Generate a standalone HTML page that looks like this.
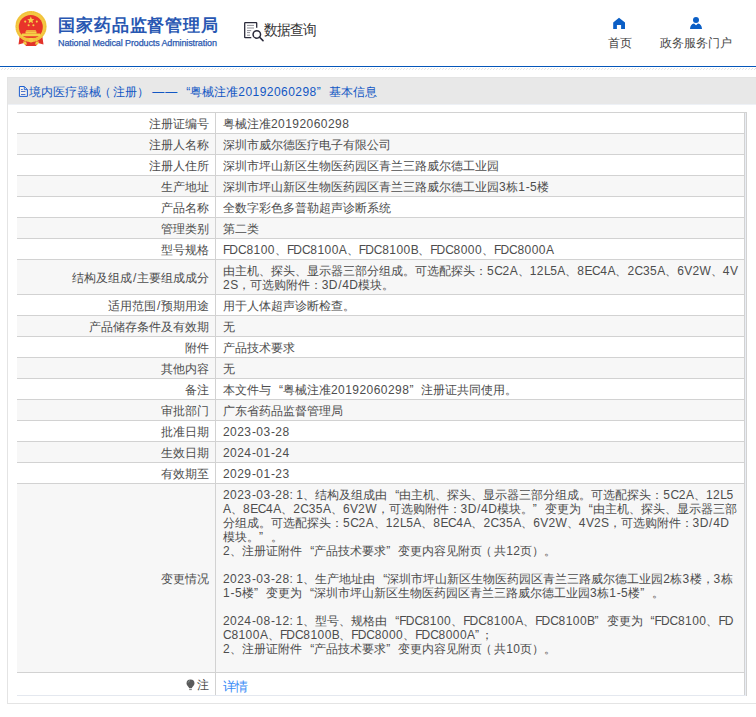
<!DOCTYPE html>
<html><head><meta charset="utf-8">
<style>
*{margin:0;padding:0;box-sizing:border-box}
html,body{width:756px;height:717px;overflow:hidden;background:#fff}
body{font-family:"Liberation Sans",sans-serif;font-size:12px;color:#4d4d4d;position:relative}
.abs{position:absolute}
#hdr{position:absolute;left:0;top:0;width:756px;height:66px}
#blueline{position:absolute;left:0;top:66px;width:756px;height:1px;background:#0556b9}
#hatch1{position:absolute;left:0;top:68px;width:756px;height:1px;background:repeating-linear-gradient(90deg,#fff 0 2px,#e2e2e2 2px 3px)}
#hatch2{position:absolute;left:0;top:69px;width:756px;height:1px;background:repeating-linear-gradient(90deg,#fff 0 1px,#e6e6e6 1px 2px,#fff 2px 3px)}
#title{left:58px;top:14px;font-size:17px;font-weight:bold;color:#2857b2;white-space:nowrap;letter-spacing:0.9px}
#eng{left:58px;top:37.5px;font-size:9px;color:#2a58b0;white-space:nowrap;letter-spacing:-0.12px;-webkit-text-stroke:0.25px #2a58b0}
#dq{left:264px;top:21px;font-size:14px;color:#333;white-space:nowrap;letter-spacing:-1.1px;transform:scaleY(1.1);transform-origin:0 0}
.nav{font-size:12px;color:#444;white-space:nowrap}
#panel{position:absolute;left:7px;top:77px;width:760px;height:627px;border:1px solid #e4e4e4;border-right:none}
#ph{position:absolute;left:0;top:0;width:100%;height:27px;background:#e8e8e8;border-bottom:1px solid #eef1f6}
#ph .t{position:absolute;left:21px;top:6px;color:#1257c4;font-size:12px;white-space:nowrap}
#tbl{position:absolute;left:17px;top:112px;width:730px;border-collapse:collapse}
.row{position:absolute;left:17px;width:728px;border-top:1px solid #d2d2d2}
#rb{position:absolute;left:744px;top:112px;width:3px;height:584px;border:1px solid #d2d2d2;border-bottom:none;background:#e9edf4}
.row.g{background:#f7f7f7}
.row.last{border-bottom:1px solid #e4e8ef}
.lab{position:absolute;left:0;width:198px;text-align:right;padding-right:6px;top:0;bottom:0;display:flex;align-items:center;justify-content:flex-end;line-height:14px;padding-top:2px;white-space:nowrap}
.val{position:absolute;left:198px;right:0;top:0;bottom:0;border-left:1px solid #d2d2d2;border-right:1px solid #d2d2d2;padding:4px 0 0 7px;line-height:14px;white-space:nowrap}
.a{letter-spacing:0px}
.d{letter-spacing:0.45px}
.f{letter-spacing:-0.47px}
.sl{padding:0 0.7px;font-weight:normal}
.hy{padding:0 0.4px;font-weight:normal}
.ql{margin-left:8px}
.qr{margin-right:8px}
.qr2{margin-right:1.5px}
.lp{position:relative;left:-2.5px}
.dash{letter-spacing:1px}
.link{color:#3a8cf6;font-size:13px;letter-spacing:-1.1px;position:relative;top:2.5px}
.bulb{margin-right:2px}
</style></head><body>

<!-- emblem -->
<svg class="abs" style="left:10px;top:8px" width="42" height="42" viewBox="10 8 42 42">
 <path d="M20 34 L18.5 44.5 L24 43 L26 46 L36 46 L38 43 L43.5 44.5 L42 34 Z" fill="#e2332a"/>
 <circle cx="31" cy="26.5" r="15.6" fill="#f4c842"/>
 <circle cx="31" cy="26.5" r="14.6" fill="none" stroke="#e9b830" stroke-width="0.8" stroke-dasharray="1.2 1"/>
 <circle cx="30.8" cy="27" r="12" fill="#e8342a"/>
 <path d="M30.8 16.6 l1.05 2.3 2.5 0.25 -1.9 1.65 0.55 2.45 -2.2 -1.3 -2.2 1.3 0.55 -2.45 -1.9 -1.65 2.5 -0.25z" fill="#f5d046"/>
 <circle cx="25.2" cy="21.6" r="1.05" fill="#f5d046"/>
 <circle cx="36.8" cy="21.6" r="1.05" fill="#f5d046"/>
 <circle cx="28.6" cy="25.3" r="1.05" fill="#f5d046"/>
 <circle cx="33.4" cy="25.3" r="1.05" fill="#f5d046"/>
 <path d="M26.5 30.2 h9 l1.2 1.6 h-11.4z M25.5 32 h11 v1.2 h-11z M22 33.4 h18 l1 2.8 h-20z" fill="#f5d046"/>
 <path d="M22 36.5 q9 3 18 0 l-1.5 2.5 q-7.5 2.5 -15 0z" fill="#f3c23c"/>
 <circle cx="31" cy="40.2" r="2.4" fill="#f5cc44"/>
 <path d="M23 41.5 h3 l1 3 h-3z M36 41.5 h3 l-1 3 h-3z" fill="#f5cc44"/>
</svg>
<div id="title" class="abs">国家药品监督管理局</div>
<div id="eng" class="abs">National Medical Products Administration</div>

<!-- data query icon -->
<svg class="abs" style="left:240px;top:18px" width="28" height="28" viewBox="240 18 28 28">
 <path d="M251.3 37.7 H245.2 Q244.7 37.7 244.7 37.2 V23.2 Q244.7 22.7 245.2 22.7 H256.2 Q256.7 22.7 256.7 23.2 V27.8" fill="none" stroke="#2b2b3b" stroke-width="1.3"/>
 <path d="M247 25.4 h7 M247 28 h7 M247 30.6 h4.2 M247 32.6 h3 M247 35.2 h3" stroke="#2b2b3b" stroke-width="0.7" opacity="0.75"/>
 <circle cx="256.8" cy="34.4" r="3.75" fill="none" stroke="#2b2b3b" stroke-width="1.5"/>
 <path d="M259.4 37 L263 40.6" stroke="#2b2b3b" stroke-width="1.6" stroke-linecap="round"/>
</svg>
<div id="dq" class="abs">数据查询</div>

<!-- nav -->
<svg class="abs" style="left:613px;top:17px" width="13" height="13" viewBox="0 0 13 13">
 <path d="M6 0.8 L12 5.6 V11.9 H8.1 V8.1 H3.9 V11.9 H0.2 V5.6 Z" fill="#0b5fc6"/>
</svg>
<div class="abs nav" style="left:608px;top:35px">首页</div>
<svg class="abs" style="left:689px;top:16px" width="14" height="14" viewBox="0 0 14 14">
 <circle cx="7" cy="4" r="3" fill="#0b5fc6"/>
 <path d="M1 13.1 Q1.3 8.2 5 7.6 L7 9.2 L9 7.6 Q12.7 8.2 13 13.1 Z" fill="#0b5fc6"/>
</svg>
<div class="abs nav" style="left:660px;top:35px">政务服务门户</div>

<div id="blueline"></div>
<div id="hatch1"></div><div id="hatch2"></div>

<div id="panel">
 <div id="ph"><svg style="position:absolute;left:10px;top:8px" width="11" height="12" viewBox="18 86 11 12"><path d="M19.4 86.5 H24.3 L27.4 89.6 V96.4 H19.4 Z" fill="#f4f1ee" stroke="#1c5fd0" stroke-width="1"/><path d="M24.3 86.6 V89.6 H27.3" fill="none" stroke="#1c5fd0" stroke-width="0.9"/><path d="M21 89.5 h1.8 M21 91.5 h4.4 M21 94.5 h4.4" stroke="#3f68c8" stroke-width="0.9"/></svg><div class="t">境内医疗器械<span class="lp">（</span>注册）<span class="a"> </span><span class="dash">——</span><span class="ql">“</span>粤械注准<span class="a"><span class="d">20192060298</span></span><span class="qr">”</span>基本信息</div></div>
</div>

<div id="tblwrap">
<div id="rb"></div>
<div class="row" style="top:112px;height:21px"><div class="lab">注册证编号</div><div class="val">粤械注准<span class="a"><span class="d">20192060298</span></span></div></div>
<div class="row g" style="top:133px;height:21px"><div class="lab">注册人名称</div><div class="val">深圳市威尔德医疗电子有限公司</div></div>
<div class="row" style="top:154px;height:21px"><div class="lab">注册人住所</div><div class="val">深圳市坪山新区生物医药园区青兰三路威尔德工业园</div></div>
<div class="row g" style="top:175px;height:21px"><div class="lab">生产地址</div><div class="val">深圳市坪山新区生物医药园区青兰三路威尔德工业园<span class="a"><span class="d">3</span></span>栋<span class="a"><span class="d">1</span><b class="hy">-</b><span class="d">5</span></span>楼</div></div>
<div class="row" style="top:196px;height:21px"><div class="lab">产品名称</div><div class="val">全数字彩色多普勒超声诊断系统</div></div>
<div class="row g" style="top:217px;height:21px"><div class="lab">管理类别</div><div class="val">第二类</div></div>
<div class="row" style="top:238px;height:21px"><div class="lab">型号规格</div><div class="val"><span class="a"><span style="letter-spacing:-1.0px">F</span>D<span style="letter-spacing:-0.3px">C</span><span class="d">8100</span></span>、<span class="a"><span style="letter-spacing:-1.0px">F</span>D<span style="letter-spacing:-0.3px">C</span><span class="d">8100</span>A</span>、<span class="a"><span style="letter-spacing:-1.0px">F</span>D<span style="letter-spacing:-0.3px">C</span><span class="d">8100</span><span style="letter-spacing:-0.5px">B</span></span>、<span class="a"><span style="letter-spacing:-1.0px">F</span>D<span style="letter-spacing:-0.3px">C</span><span class="d">8000</span></span>、<span class="a"><span style="letter-spacing:-1.0px">F</span>D<span style="letter-spacing:-0.3px">C</span><span class="d">8000</span>A</span></div></div>
<div class="row g" style="top:259px;height:35px"><div class="lab">结构及组成<span class="a"><b class="sl">/</b></span>主要组成成分</div><div class="val">由主机、探头、显示器三部分组成。可选配探头：<span class="a"><span class="d">5</span><span style="letter-spacing:-0.3px">C</span><span class="d">2</span>A</span>、<span class="a"><span class="d">12</span><span style="letter-spacing:-0.4px">L</span><span class="d">5</span>A</span>、<span class="a"><span class="d">8</span><span style="letter-spacing:-0.5px">E</span><span style="letter-spacing:-0.3px">C</span><span class="d">4</span>A</span>、<span class="a"><span class="d">2</span><span style="letter-spacing:-0.3px">C</span><span class="d">35</span>A</span>、<span class="a"><span class="d">6</span>V<span class="d">2</span>W</span>、<span class="a"><span class="d">4</span>V</span><br><span class="a"><span class="d">2</span><span style="letter-spacing:-0.5px">S</span></span>，可选购附件：<span class="a"><span class="d">3</span>D<b class="sl">/</b><span class="d">4</span>D</span>模块。</div></div>
<div class="row" style="top:294px;height:21px"><div class="lab">适用范围<span class="a"><b class="sl">/</b></span>预期用途</div><div class="val">用于人体超声诊断检查。</div></div>
<div class="row g" style="top:315px;height:21px"><div class="lab">产品储存条件及有效期</div><div class="val">无</div></div>
<div class="row" style="top:336px;height:21px"><div class="lab">附件</div><div class="val">产品技术要求</div></div>
<div class="row g" style="top:357px;height:21px"><div class="lab">其他内容</div><div class="val">无</div></div>
<div class="row" style="top:378px;height:21px"><div class="lab">备注</div><div class="val">本文件与<span class="ql">“</span>粤械注准<span class="a"><span class="d">20192060298</span></span><span class="qr">”</span>注册证共同使用。</div></div>
<div class="row g" style="top:399px;height:21px"><div class="lab">审批部门</div><div class="val">广东省药品监督管理局</div></div>
<div class="row" style="top:420px;height:21px"><div class="lab">批准日期</div><div class="val"><span class="a"><span class="d">2023</span><b class="hy">-</b><span class="d">03</span><b class="hy">-</b><span class="d">28</span></span></div></div>
<div class="row g" style="top:441px;height:21px"><div class="lab">生效日期</div><div class="val"><span class="a"><span class="d">2024</span><b class="hy">-</b><span class="d">01</span><b class="hy">-</b><span class="d">24</span></span></div></div>
<div class="row" style="top:462px;height:21px"><div class="lab">有效期至</div><div class="val"><span class="a"><span class="d">2029</span><b class="hy">-</b><span class="d">01</span><b class="hy">-</b><span class="d">23</span></span></div></div>
<div class="row g" style="top:483px;height:189px"><div class="lab">变更情况</div><div class="val"><span class="a"><span class="d">2023</span><b class="hy">-</b><span class="d">03</span><b class="hy">-</b><span class="d">28</span>: <span class="d">1</span></span>、结构及组成由<span class="ql">“</span>由主机、探头、显示器三部分组成。可选配探头：<span class="a"><span class="d">5</span><span style="letter-spacing:-0.3px">C</span><span class="d">2</span>A</span>、<span class="a"><span class="d">12</span><span style="letter-spacing:-0.4px">L</span><span class="d">5</span></span><br><span class="a">A</span>、<span class="a"><span class="d">8</span><span style="letter-spacing:-0.5px">E</span><span style="letter-spacing:-0.3px">C</span><span class="d">4</span>A</span>、<span class="a"><span class="d">2</span><span style="letter-spacing:-0.3px">C</span><span class="d">35</span>A</span>、<span class="a"><span class="d">6</span>V<span class="d">2</span>W</span>，可选购附件：<span class="a"><span class="d">3</span>D<b class="sl">/</b><span class="d">4</span>D</span>模块。<span class="qr">”</span>变更为<span class="ql">“</span>由主机、探头、显示器三部<br>分组成。可选配探头：<span class="a"><span class="d">5</span><span style="letter-spacing:-0.3px">C</span><span class="d">2</span>A</span>、<span class="a"><span class="d">12</span><span style="letter-spacing:-0.4px">L</span><span class="d">5</span>A</span>、<span class="a"><span class="d">8</span><span style="letter-spacing:-0.5px">E</span><span style="letter-spacing:-0.3px">C</span><span class="d">4</span>A</span>、<span class="a"><span class="d">2</span><span style="letter-spacing:-0.3px">C</span><span class="d">35</span>A</span>、<span class="a"><span class="d">6</span>V<span class="d">2</span>W</span>、<span class="a"><span class="d">4</span>V<span class="d">2</span><span style="letter-spacing:-0.5px">S</span></span>，可选购附件：<span class="a"><span class="d">3</span>D<b class="sl">/</b><span class="d">4</span>D</span><br>模块。<span class="qr">”</span>。<br><span class="a"><span class="d">2</span></span>、注册证附件<span class="ql">“</span>产品技术要求<span class="qr">”</span>变更内容见附页<span class="lp">（</span>共<span class="a"><span class="d">12</span></span>页）。<br>&nbsp;<br><span class="a"><span class="d">2023</span><b class="hy">-</b><span class="d">03</span><b class="hy">-</b><span class="d">28</span>: <span class="d">1</span></span>、生产地址由<span class="ql">“</span>深圳市坪山新区生物医药园区青兰三路威尔德工业园<span class="a"><span class="d">2</span></span>栋<span class="a"><span class="d">3</span></span>楼，<span class="a"><span class="d">3</span></span>栋<br><span class="a"><span class="d">1</span><b class="hy">-</b><span class="d">5</span></span>楼<span class="qr">”</span>变更为<span class="ql">“</span>深圳市坪山新区生物医药园区青兰三路威尔德工业园<span class="a"><span class="d">3</span></span>栋<span class="a"><span class="d">1</span><b class="hy">-</b><span class="d">5</span></span>楼<span class="qr">”</span>。<br>&nbsp;<br><span class="a"><span class="d">2024</span><b class="hy">-</b><span class="d">08</span><b class="hy">-</b><span class="d">12</span>: <span class="d">1</span></span>、型号、规格由<span class="ql">“</span><span class="a"><span style="letter-spacing:-1.0px">F</span>D<span style="letter-spacing:-0.3px">C</span><span class="d">8100</span></span>、<span class="a"><span style="letter-spacing:-1.0px">F</span>D<span style="letter-spacing:-0.3px">C</span><span class="d">8100</span>A</span>、<span class="a"><span style="letter-spacing:-1.0px">F</span>D<span style="letter-spacing:-0.3px">C</span><span class="d">8100</span><span style="letter-spacing:-0.5px">B</span></span><span class="qr">”</span>变更为<span class="ql">“</span><span class="a"><span style="letter-spacing:-1.0px">F</span>D<span style="letter-spacing:-0.3px">C</span><span class="d">8100</span></span>、<span class="a"><span style="letter-spacing:-1.0px">F</span>D</span><br><span class="a"><span style="letter-spacing:-0.3px">C</span><span class="d">8100</span>A</span>、<span class="a"><span style="letter-spacing:-1.0px">F</span>D<span style="letter-spacing:-0.3px">C</span><span class="d">8100</span><span style="letter-spacing:-0.5px">B</span></span>、<span class="a"><span style="letter-spacing:-1.0px">F</span>D<span style="letter-spacing:-0.3px">C</span><span class="d">8000</span></span>、<span class="a"><span style="letter-spacing:-1.0px">F</span>D<span style="letter-spacing:-0.3px">C</span><span class="d">8000</span>A</span><span class="qr2">”</span>；<br><span class="a"><span class="d">2</span></span>、注册证附件<span class="ql">“</span>产品技术要求<span class="qr">”</span>变更内容见附页<span class="lp">（</span>共<span class="a"><span class="d">10</span></span>页）。</div></div>
<div class="row last" style="top:672px;height:24px"><div class="lab"><svg class="bulb" width="9" height="12" viewBox="0 0 9 12"><path d="M4.5 0.6 A4 4 0 0 1 8.5 4.6 C8.5 6.6 6.3 7.6 5.8 9.2 H3.2 C2.7 7.6 0.5 6.6 0.5 4.6 A4 4 0 0 1 4.5 0.6Z" fill="#5a5a5a"/><path d="M2.2 3.6 Q2.6 2 4 1.6" stroke="#9aa" stroke-width="0.7" fill="none"/><path d="M3.2 10.2 h2.6 v0.9 h-2.6z" fill="#666"/></svg>注</div><div class="val"><span class="link">详情</span></div></div>
</div>
</body></html>
